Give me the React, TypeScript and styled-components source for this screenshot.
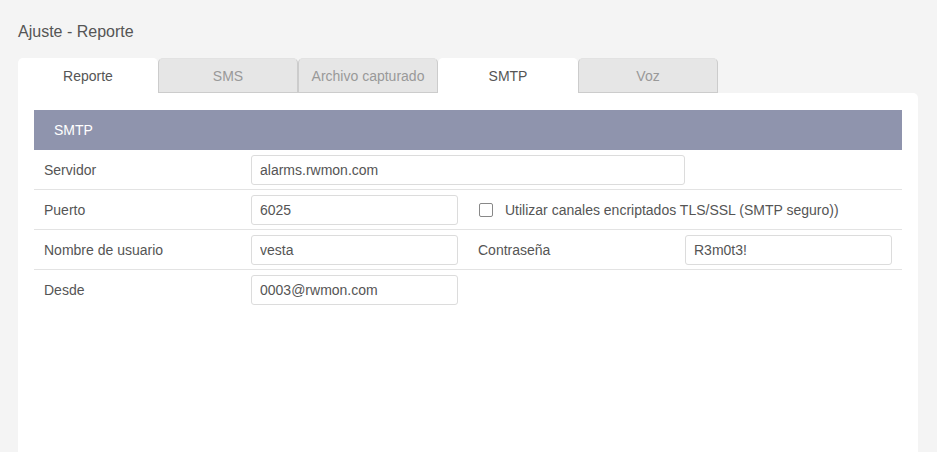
import styled, { createGlobalStyle } from 'styled-components';

const GlobalStyle = createGlobalStyle`
  html, body {
    margin: 0;
    padding: 0;
    background: #f4f4f4;
    font-family: "Liberation Sans", Arial, sans-serif;
  }
`;

const Page = styled.div`
  padding: 18px 19px 0 18px;
  height: 452px;
  box-sizing: border-box;
  display: flex;
  flex-direction: column;
`;

const Title = styled.h1`
  margin: 0 0 12px;
  font-size: 16px;
  font-weight: 400;
  line-height: 28px;
  color: #555;
`;

const TabBar = styled.div`
  display: flex;
  height: 35px;
`;

const Tab = styled.div<{ $active?: boolean; $first?: boolean }>`
  width: 140px;
  box-sizing: border-box;
  display: flex;
  align-items: center;
  justify-content: center;
  font-size: 14px;
  border-radius: 5px 5px 0 0;
  background: ${(p) => (p.$active ? '#fff' : '#e6e6e6')};
  color: ${(p) => (p.$active ? '#555' : '#999')};
  border: ${(p) => (p.$active ? 'none' : '1px solid #cccccc')};
  border-top-color: #e2e2e2;
  border-left: ${(p) => (p.$active || p.$first ? 'none' : '1px solid #cccccc')};
  cursor: pointer;
`;

const Panel = styled.div`
  flex: 1;
  background: #fff;
  border-radius: 0 5px 0 0;
  padding: 17px 16px 0;
`;

const SectionHeader = styled.div`
  height: 40px;
  background: #8f94ad;
  color: #fff;
  font-size: 14px;
  display: flex;
  align-items: center;
  padding-left: 20px;
`;

const Row = styled.div<{ $last?: boolean }>`
  display: grid;
  grid-template-columns: repeat(4, 217px);
  align-items: center;
  height: 40px;
  box-sizing: border-box;
  border-bottom: ${(p) => (p.$last ? 'none' : '1px solid #e3e3e3')};
`;

const Label = styled.div`
  padding-left: 10px;
  font-size: 14px;
  color: #555;
`;

const Input = styled.input<{ $wide?: boolean }>`
  box-sizing: border-box;
  height: 30px;
  width: ${(p) => (p.$wide ? '434px' : '207px')};
  grid-column: ${(p) => (p.$wide ? 'span 2' : 'span 1')};
  border: 1px solid #dcdcdc;
  border-radius: 3px;
  padding: 0 8px;
  font-family: inherit;
  font-size: 14px;
  color: #555;
  outline: none;
`;

const CheckLabel = styled.label`
  grid-column: span 2;
  display: flex;
  align-items: center;
  gap: 12px;
  padding-left: 11px;
  font-size: 14px;
  color: #555;
`;

const Box = styled.span`
  width: 14px;
  height: 14px;
  box-sizing: border-box;
  border: 1px solid #888;
  border-radius: 2px;
  background: #fff;
`;

const tabs = ['Reporte', 'SMS', 'Archivo capturado', 'SMTP', 'Voz'];
const activeTabs = ['Reporte', 'SMTP'];

export default function App() {
  return (
    <>
      <GlobalStyle />
      <Page>
        <Title>Ajuste - Reporte</Title>
        <TabBar>
          {tabs.map((t) => (
            <Tab key={t} $active={activeTabs.includes(t)}>
              {t}
            </Tab>
          ))}
        </TabBar>
        <Panel>
          <SectionHeader>SMTP</SectionHeader>
          <Row>
            <Label>Servidor</Label>
            <Input $wide defaultValue="alarms.rwmon.com" />
          </Row>
          <Row>
            <Label>Puerto</Label>
            <Input defaultValue="6025" />
            <CheckLabel>
              <Box />
              Utilizar canales encriptados TLS/SSL (SMTP seguro))
            </CheckLabel>
          </Row>
          <Row>
            <Label>Nombre de usuario</Label>
            <Input defaultValue="vesta" />
            <Label>Contraseña</Label>
            <Input defaultValue="R3m0t3!" />
          </Row>
          <Row $last>
            <Label>Desde</Label>
            <Input defaultValue="0003@rwmon.com" />
          </Row>
        </Panel>
      </Page>
    </>
  );
}
